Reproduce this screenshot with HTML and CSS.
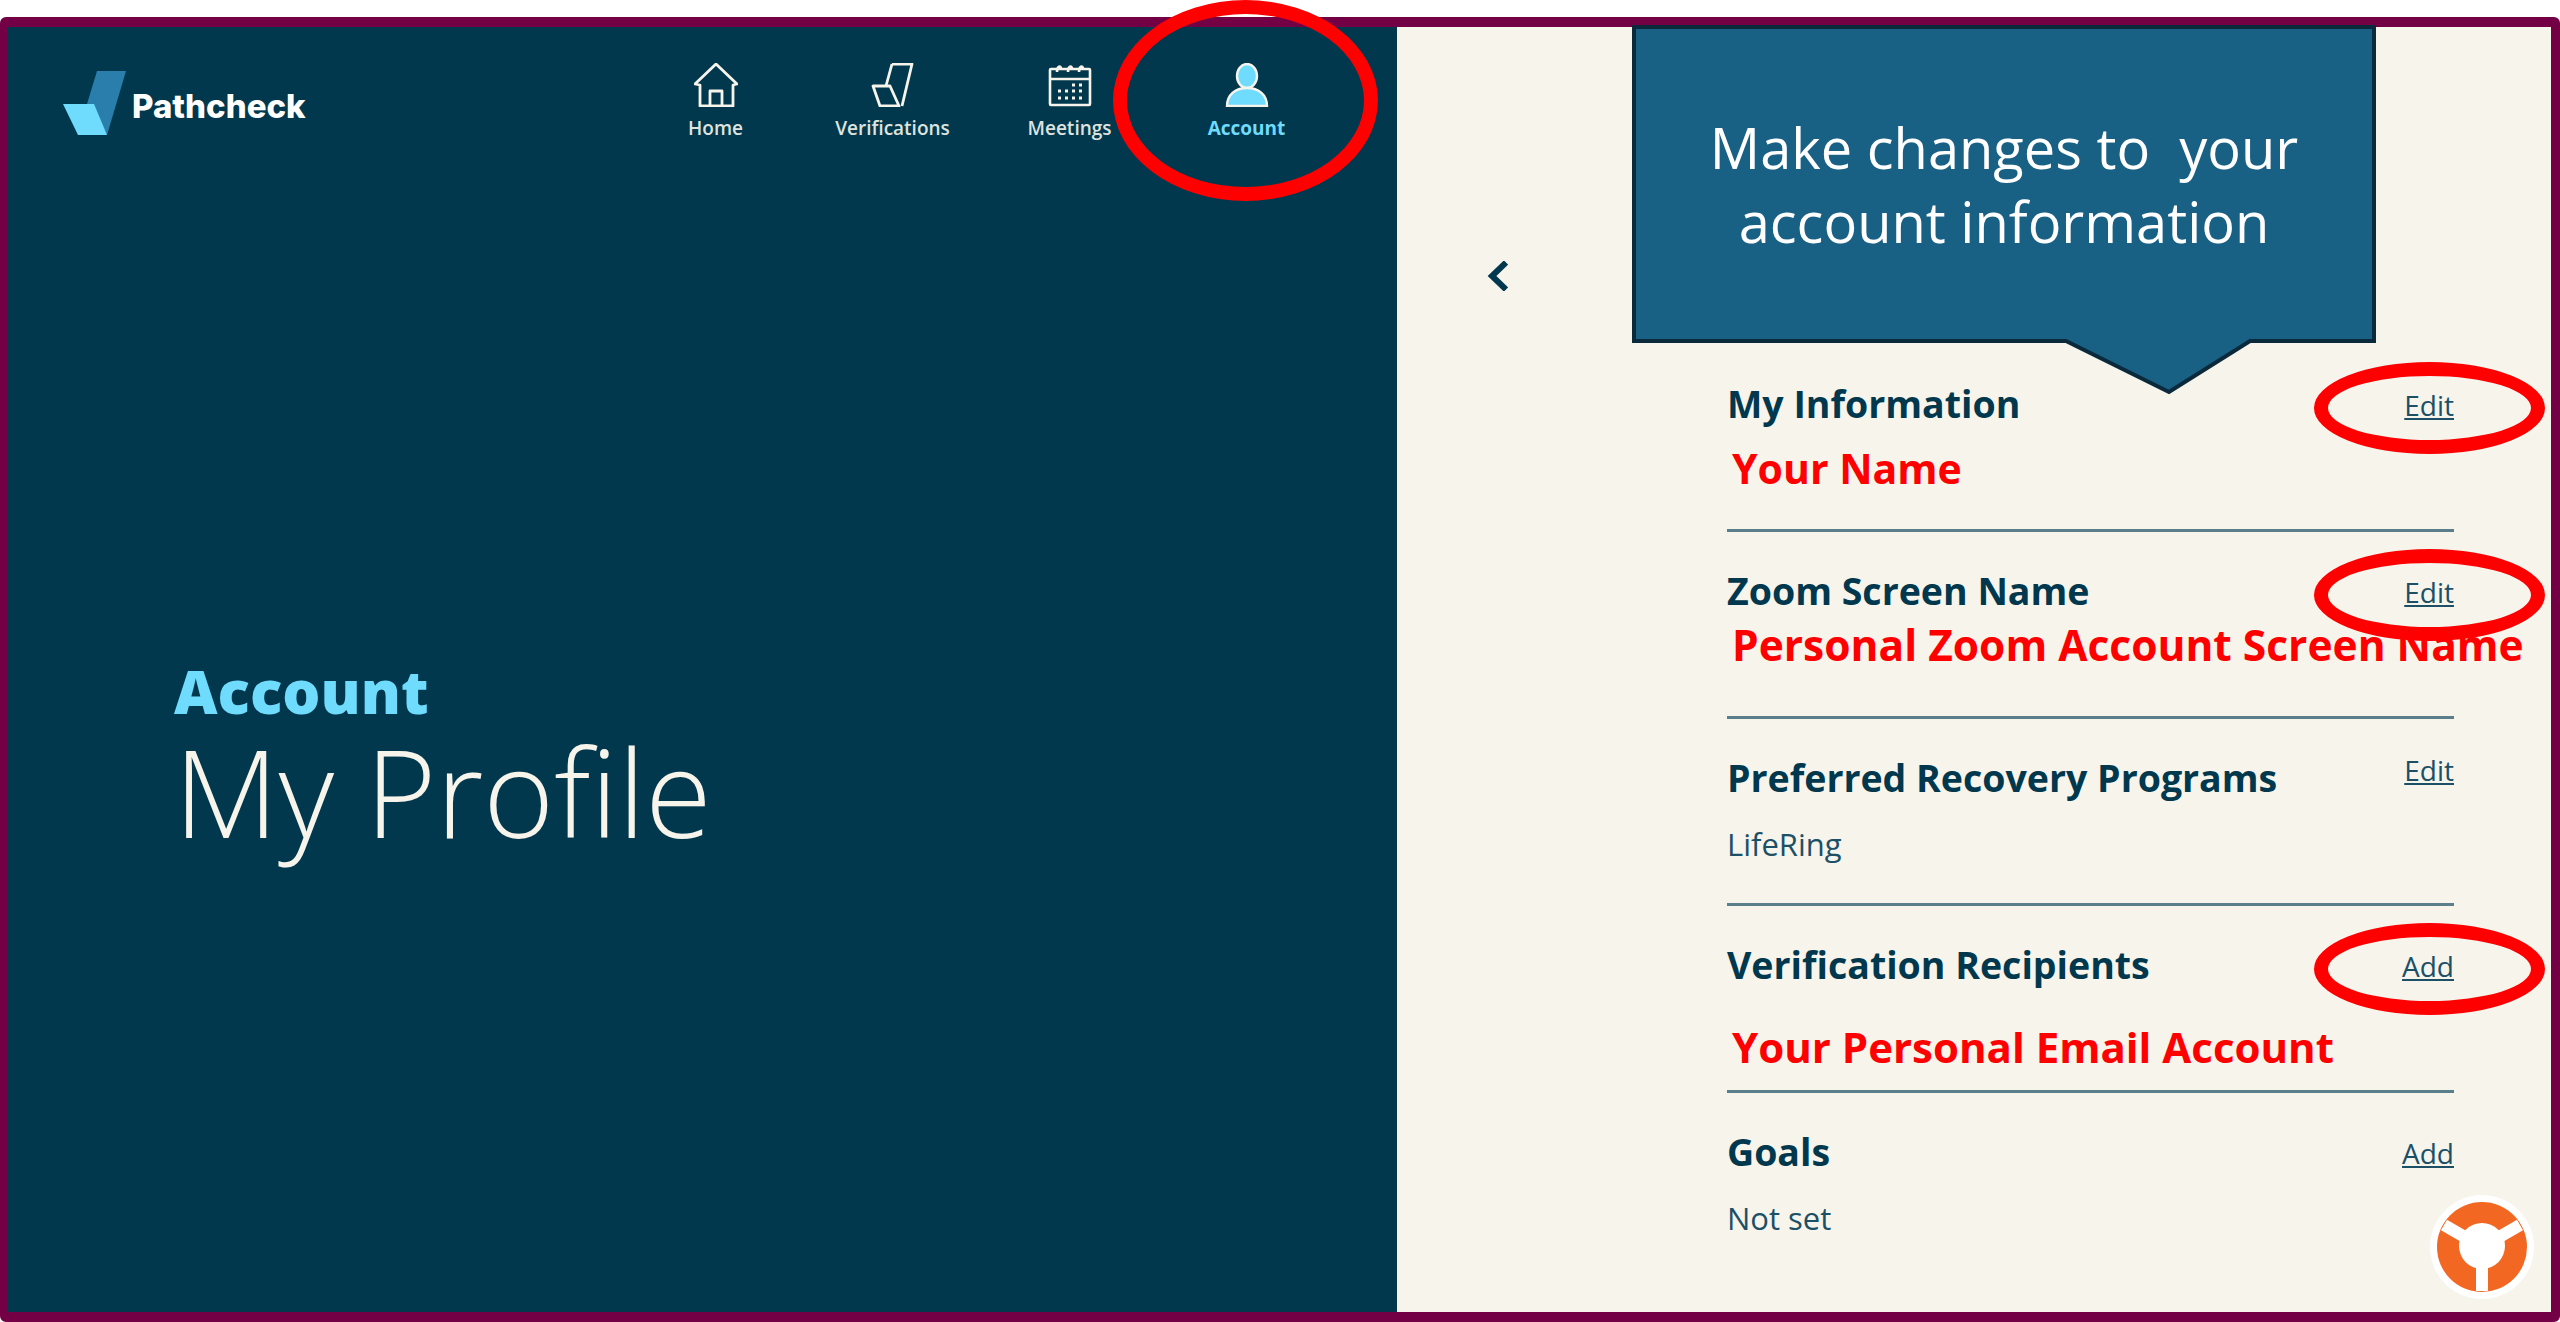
FILE: index.html
```html
<!DOCTYPE html>
<html lang="en">

<head>
    <meta charset="UTF-8">
    <meta name="viewport" content="width=device-width, initial-scale=1.0">
    <title>My Profile</title>
    <link rel="stylesheet" href="styles.css">
</head>

<body>
    <div class="frame">
        <div class="left-panel">
            <div class="topbar">
                <div class="logo">
                    <svg class="logo-mark" viewBox="0 0 64 66" width="64" height="66">
                        <polygon points="34,0 63,0 44,64 24,33" fill="#2a7eab" />
                        <polygon points="0,33 31,33 44,64 15,64" fill="#6fdcfd" />
                    </svg>
                    <span class="logo-text">Pathcheck</span>
                </div>
                <nav class="nav">
                    <a class="nav-item">
                        <svg class="nav-icon" viewBox="0 0 44 44" width="44" height="44" fill="none" stroke="#f7f4ec" stroke-width="2.8" stroke-linejoin="round">
                            <path d="M1 21 22 1l21 20-4 1v21H6V22z" />
                            <path d="M16 43V28h12v15" />
                        </svg>
                        Home
                    </a>
                    <a class="nav-item">
                        <svg class="nav-icon" viewBox="0 0 44 44" width="44" height="44" fill="none" stroke="#f7f4ec" stroke-width="2.8" stroke-linejoin="round">
                            <path d="M21 1h20l-10 42" />
                            <path d="M21 1 15 23" />
                            <path d="M2 23h17l9 20H9z" />
                        </svg>
                        Verifications
                    </a>
                    <a class="nav-item">
                        <svg class="nav-icon" viewBox="0 0 44 44" width="44" height="44" fill="none" stroke="#f7f4ec" stroke-width="2.6">
                            <rect x="2" y="6" width="40" height="36" rx="1" />
                            <path d="M2 16h40" />
                            <path d="M9 9c0-6 4-7 4-3M20 9c0-6 4-7 4-3M31 9c0-6 4-7 4-3" />
                            <path d="M24 22h3M31 22h3M10 28h3M17 28h3M24 28h3M31 28h3M10 35h3M17 35h3M24 35h3M31 35h3" stroke-width="3" />
                        </svg>
                        Meetings
                    </a>
                    <a class="nav-item active">
                        <svg class="nav-icon" viewBox="0 0 44 44" width="44" height="44" fill="#6fdcfd" stroke="#f7f4ec" stroke-width="2.4">
                            <ellipse cx="22" cy="13" rx="10" ry="12" />
                            <path d="M2 43c0-11 8-18 20-18s20 7 20 18z" />
                        </svg>
                        Account
                    </a>
                </nav>
            </div>
            <div class="hero">
                <div class="hero-kicker">Account</div>
                <h1 class="hero-title">My Profile</h1>
            </div>
            <div class="ring ring-account"></div>
        </div>

        <div class="right-panel">
            <div class="back">
                <svg viewBox="0 0 21 30" width="21" height="30" fill="none" stroke="#01384d" stroke-width="6">
                    <path d="M19 1.5 5 15l14 13.5" />
                </svg>
            </div>
            <div class="list">
                <div class="row">
                    <div class="row-head">
                        <h2>My Information</h2>
                        <a class="row-link">Edit</a>
                    </div>
                    <div class="note note-name">Your Name</div>
                    <div class="ring ring-row"></div>
                </div>
                <div class="row">
                    <div class="row-head">
                        <h2>Zoom Screen Name</h2>
                        <a class="row-link">Edit</a>
                    </div>
                    <div class="note note-zoom">Personal Zoom Account Screen Name</div>
                    <div class="ring ring-row"></div>
                </div>
                <div class="row">
                    <div class="row-head">
                        <h2>Preferred Recovery Programs</h2>
                        <a class="row-link row-link-high">Edit</a>
                    </div>
                    <p class="row-value">LifeRing</p>
                </div>
                <div class="row">
                    <div class="row-head">
                        <h2>Verification Recipients</h2>
                        <a class="row-link">Add</a>
                    </div>
                    <div class="note note-email">Your Personal Email Account</div>
                    <div class="ring ring-row"></div>
                </div>
                <div class="row row-last">
                    <div class="row-head">
                        <h2>Goals</h2>
                        <a class="row-link">Add</a>
                    </div>
                    <p class="row-value">Not set</p>
                </div>
            </div>

            <div class="callout">
                <svg class="callout-shape" viewBox="0 0 744 371" width="744" height="371">
                    <polygon points="2,2 742,2 742,316 618,316 537,367 434,316 2,316" fill="#186084" stroke="#0a2a3c" stroke-width="4" />
                </svg>
                <p class="callout-text">Make changes to&nbsp; your<br>account information</p>
            </div>

            <svg class="help" viewBox="0 0 104 104" width="104" height="104">
                <circle cx="52" cy="52" r="52" fill="#fff" />
                <circle cx="52" cy="52" r="45" fill="#f26722" />
                <path d="M52 52V96M52 52 14 30M52 52 90 30" stroke="#fff" stroke-width="12" stroke-linejoin="round" />
                <circle cx="52" cy="51" r="23" fill="#fff" />
            </svg>
        </div>
    </div>
</body>

</html>
```

FILE: styles.css
```css
* {
    box-sizing: border-box;
}

body {
    margin: 0;
    padding-top: 17px;
    height: 1322px;
    overflow: hidden;
    background-color: #fff;
    font-family: "Open Sans", Arial, sans-serif;
}

h1,
h2,
p {
    margin: 0;
}

.frame {
    display: flex;
    height: 1305px;
    border: 10px solid #730045;
    border-left-width: 8px;
    border-right-width: 9px;
    border-radius: 6px;
}

.left-panel {
    position: relative;
    width: 1389px;
    display: flex;
    flex-direction: column;
    background-color: #01384d;
    color: #f7f4ec;
}

.topbar {
    display: flex;
    height: 130px;
}

.logo {
    display: flex;
    align-items: flex-start;
    gap: 5px;
    width: 619px;
    padding: 44px 0 0 55px;
}

.logo-text {
    margin-top: 15px;
    font-family: Inter, sans-serif;
    font-size: 33px;
    font-weight: 800;
    color: #fff;
}

.nav {
    display: flex;
    padding-top: 36px;
}

.nav-item {
    width: 177px;
    display: flex;
    flex-direction: column;
    align-items: center;
    gap: 8px;
    font-size: 19px;
    font-weight: 600;
    line-height: 27px;
    color: #dfe3df;
}

.nav-item.active {
    font-weight: 700;
    color: #6fdcfd;
}

.hero {
    padding: 499px 0 0 166px;
}

.hero-kicker {
    font-size: 60px;
    font-weight: 800;
    line-height: 70px;
    color: #6fdcfd;
}

.hero-title {
    font-size: 121px;
    font-weight: 300;
    line-height: 130px;
}

.right-panel {
    position: relative;
    flex: 1;
    display: flex;
    background-color: #f7f4ec;
}

.back {
    width: 330px;
    padding: 234px 0 0 90px;
}

.list {
    width: 727px;
    padding-top: 318px;
}

.row {
    position: relative;
    height: 187px;
    border-bottom: 3px solid #5a7f8a;
    color: #01384d;
}

.row-last {
    border-bottom: none;
}

.row-head {
    display: flex;
    justify-content: space-between;
    padding-top: 40px;
}

.row-head h2 {
    font-size: 37.5px;
    font-weight: 700;
    line-height: 38px;
}

.row-link {
    margin-top: 3px;
    font-size: 28px;
    line-height: 34px;
    color: #1b5066;
    text-decoration: underline;
}

.row-link-high {
    margin-top: -6px;
}

.row-value {
    margin-top: 27px;
    font-size: 31px;
    line-height: 40px;
    color: #1b5066;
}

.note {
    position: absolute;
    left: 5px;
    font-size: 42px;
    font-weight: 700;
    line-height: 50px;
    color: #f00;
    white-space: nowrap;
}

.note-name {
    top: 98px;
    font-size: 41px;
}

.note-zoom {
    top: 88px;
    font-size: 42.5px;
}

.note-email {
    top: 116px;
}

.ring {
    position: absolute;
    border: 14px solid #f00;
    border-radius: 50%;
}

.ring-row {
    top: 17px;
    left: 587px;
    width: 231px;
    height: 92px;
}

.ring-account {
    top: -27px;
    left: 1105px;
    width: 265px;
    height: 201px;
}

.callout {
    position: absolute;
    top: -2px;
    left: 235px;
    width: 744px;
    height: 371px;
}

.callout-shape {
    display: block;
}

.callout-text {
    position: absolute;
    top: 85px;
    left: 0;
    width: 744px;
    font-size: 56px;
    line-height: 74px;
    text-align: center;
    color: #fff;
}

.help {
    position: absolute;
    top: 1168px;
    left: 1033px;
}
```
